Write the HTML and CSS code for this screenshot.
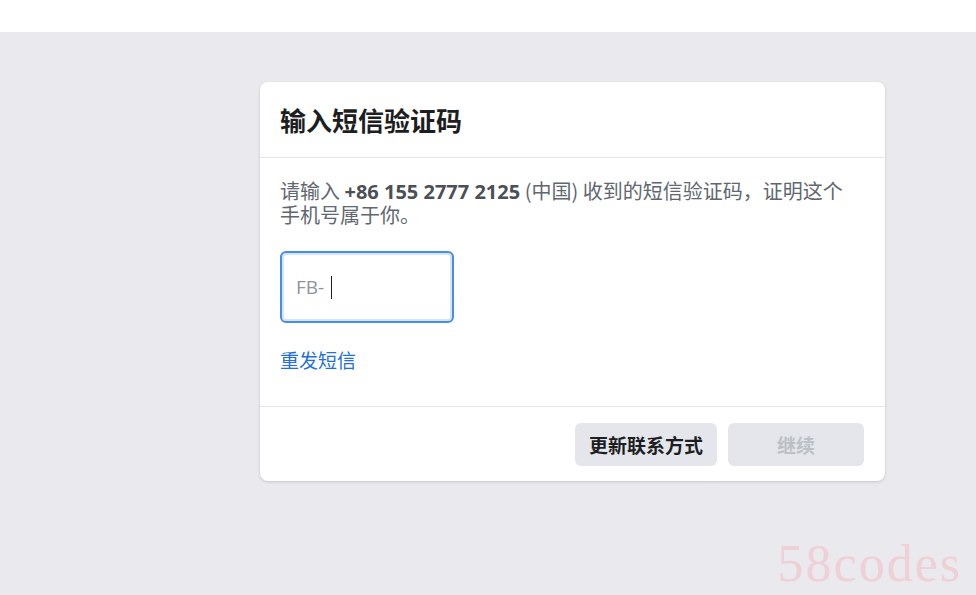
FILE: index.html
```html
<!DOCTYPE html>
<html lang="zh-CN">
<head>
    <meta charset="UTF-8">
    <meta name="viewport" content="width=device-width, initial-scale=1.0">
    <title>输入短信验证码</title>
    <link rel="stylesheet" href="styles.css">
</head>
<body>
    <div class="topbar"></div>
    <div class="page">
        <div class="card">
            <div class="card-head">
                <h2>输入短信验证码</h2>
            </div>
            <div class="card-body">
                <p class="desc">请输入 <b>+86 155 2777 2125</b> (中国) 收到的短信验证码，证明这个手机号属于你。</p>
                <div class="code-box">
                    <span class="prefix">FB-</span><span class="caret"></span>
                </div>
                <a class="resend" href="#">重发短信</a>
            </div>
            <div class="card-foot">
                <button class="btn">更新联系方式</button>
                <button class="btn btn-disabled" disabled>继续</button>
            </div>
        </div>
        <div class="watermark">58codes</div>
    </div>
</body>
</html>
```

FILE: styles.css
```css
body { margin: 0; font-family: "Noto Sans CJK SC", "Open Sans", sans-serif; background: #e9e9ee; }
.topbar { height: 32px; background: #fff; }
.page { position: relative; height: 563px; padding-top: 50px; box-sizing: border-box; }
.card { width: 625px; margin-left: 260px; background: #fff; border-radius: 8px; box-shadow: 0 1px 3px rgba(0,0,0,0.15); }
.card-head { height: 75px; border-bottom: 1px solid #e5e6ea; padding: 0 20px; display: flex; align-items: center; }
h2 { margin: 0; font-size: 26px; font-weight: bold; color: #1c1e21; }
.card-body { padding: 21px 20px 34px; }
.desc { margin: 0; font-size: 20px; line-height: 23px; color: #606770; width: 580px; }
.desc b { color: #4b4f56; font-family: "Open Sans", "Noto Sans CJK SC", sans-serif; }
.code-box { width: 174px; height: 72px; margin-top: 25px; border: 2px solid #4a8de4; border-radius: 6px; box-shadow: 0 0 0 2px #d6e4f8 inset; display: flex; align-items: center; padding-left: 14px; box-sizing: border-box; }
.prefix { font-family: "Open Sans", sans-serif; font-size: 19px; color: #8d949e; }
.caret { display: inline-block; width: 1px; height: 23px; background: #1c1e21; margin-left: 7px; }
.resend { display: block; width: max-content; margin-top: 25px; font-size: 19px; line-height: 24px; color: #216fdb; text-decoration: none; }
.card-foot { border-top: 1px solid #e5e6ea; height: 74px; padding: 0 21px; display: flex; justify-content: flex-end; align-items: center; gap: 11px; }
.btn { height: 43px; border: none; border-radius: 6px; background: #e4e6eb; font-family: "Noto Sans CJK SC", sans-serif; font-size: 19px; font-weight: bold; color: #1c1e21; padding: 0; width: 142px; }
.btn-disabled { width: 136px; color: #bcc0c4; }
.watermark { position: absolute; right: 14px; bottom: 2px; font-family: "Liberation Serif", serif; font-size: 52px; letter-spacing: 2px; color: #efd0d4; }
```
